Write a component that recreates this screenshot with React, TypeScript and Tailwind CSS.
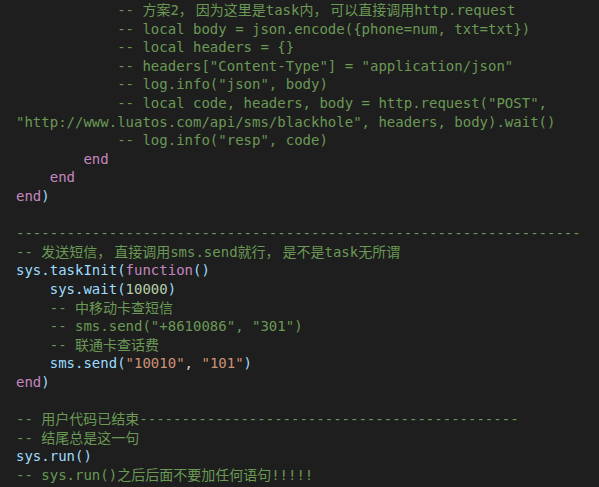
import React from "react";

// token colours (dark editor theme)
const C = "text-[#6a9955]"; // comment
const K = "text-[#c586c0]"; // keyword
const V = "text-[#9cdcfe]"; // identifier
const N = "text-[#b5cea8]"; // number
const S = "text-[#ce9178]"; // string
const P = "text-[#d4d4d4]"; // punctuation

type Tok = [string, string];

const lines: Tok[][] = [
    [["            -- 方案2，因为这里是task内，可以直接调用http.request", C]],
    [["            -- local body = json.encode({phone=num, txt=txt})", C]],
    [["            -- local headers = {}", C]],
    [["            -- headers[\"Content-Type\"] = \"application/json\"", C]],
    [["            -- log.info(\"json\", body)", C]],
    [["            -- local code, headers, body = http.request(\"POST\",", C]],
    [["\"http://www.luatos.com/api/sms/blackhole\", headers, body).wait()", C]],
    [["            -- log.info(\"resp\", code)", C]],
    [["        ", P], ["end", K]],
    [["    ", P], ["end", K]],
    [["end", K], [")", V]],
    [],
    [["-------------------------------------------------------------------", C]],
    [["-- 发送短信，直接调用sms.send就行，是不是task无所谓", C]],
    [["sys.taskInit(", V], ["function", K], ["()", V]],
    [["    sys.wait(", V], ["10000", N], [")", V]],
    [["    -- 中移动卡查短信", C]],
    [["    -- sms.send(\"+8610086\", \"301\")", C]],
    [["    -- 联通卡查话费", C]],
    [["    sms.send(", V], ["\"10010\"", S], [", ", P], ["\"101\"", S], [")", V]],
    [["end", K], [")", V]],
    [],
    [["-- 用户代码已结束---------------------------------------------", C]],
    [["-- 结尾总是这一句", C]],
    [["sys.run()", V]],
    [["-- sys.run()之后后面不要加任何语句!!!!!", C]],
];

// full-width commas take two monospace columns in the editor
function Text({ t }: { t: string }) {
    const parts = t.split("，");
    return (
        <>
            {parts.map((p, i) => (
                <React.Fragment key={i}>
                    {i > 0 && <span className="inline-block w-[16.86px]">，</span>}
                    {p}
                </React.Fragment>
            ))}
        </>
    );
}

export default function App() {
    return (
        <div className="w-[599px] h-[487px] overflow-hidden bg-[#1e1e1e] pl-4 pt-px font-['DejaVu_Sans_Mono','Noto_Sans_CJK_SC',monospace] text-[14px] leading-[18.6px]">
            {lines.map((toks, i) => (
                <div key={i} className="h-[18.6px] whitespace-pre">
                    {toks.map(([t, c], j) => (
                        <span key={j} className={c}><Text t={t} /></span>
                    ))}
                </div>
            ))}
        </div>
    );
}
